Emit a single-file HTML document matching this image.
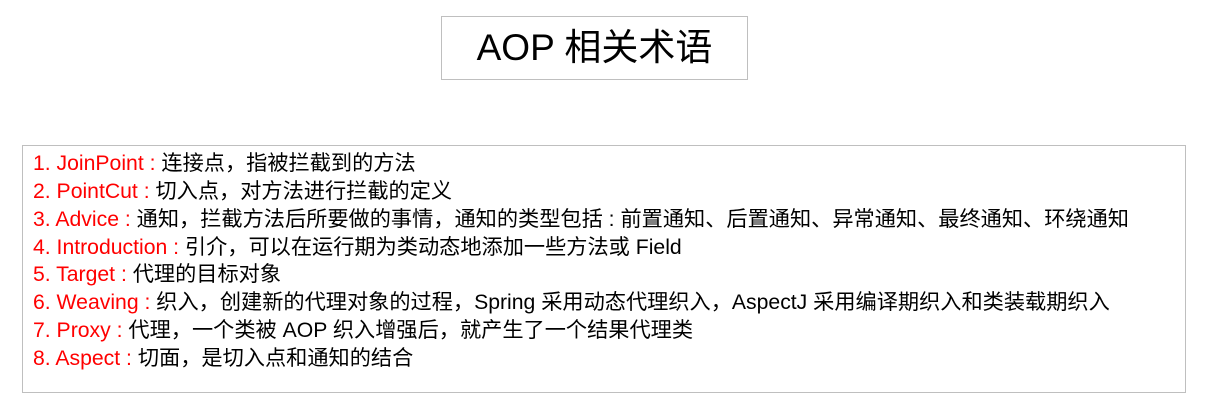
<!DOCTYPE html>
<html><head><meta charset="utf-8"><style>
body{margin:0;width:1208px;height:420px;background:#fff;position:relative;font-family:"Liberation Sans","Noto Sans CJK SC",sans-serif;}
.t{position:absolute;left:441px;top:16px;width:305px;height:62px;border:1px solid #bfbfbf;font-size:37px;line-height:62px;text-align:center;color:#000;}
.b{position:absolute;left:22px;top:145px;width:1162px;height:246px;border:1px solid #bfbfbf;}
.l{position:absolute;left:10px;font-size:21.2px;white-space:nowrap;color:#000;line-height:26px;}
.r{color:#f00}
</style></head><body>
<div class="t">AOP 相关术语</div>
<div class="b">
<div class="l" style="top:5px"><span class="r">1. JoinPoint :</span> 连接点，指被拦截到的方法</div>
<div class="l" style="top:33px"><span class="r">2. PointCut :</span> 切入点，对方法进行拦截的定义</div>
<div class="l" style="top:61px"><span class="r">3. Advice :</span> 通知，拦截方法后所要做的事情，通知的类型包括 : 前置通知、后置通知、异常通知、最终通知、环绕通知</div>
<div class="l" style="top:89px"><span class="r">4. Introduction :</span> 引介，可以在运行期为类动态地添加一些方法或 Field</div>
<div class="l" style="top:116px"><span class="r">5. Target :</span> 代理的目标对象</div>
<div class="l" style="top:144px"><span class="r">6. Weaving :</span> 织入，创建新的代理对象的过程，Spring 采用动态代理织入，AspectJ 采用编译期织入和类装载期织入</div>
<div class="l" style="top:172px"><span class="r">7. Proxy :</span> 代理，一个类被 AOP 织入增强后，就产生了一个结果代理类</div>
<div class="l" style="top:200px"><span class="r">8. Aspect :</span> 切面，是切入点和通知的结合</div>
</div>
</body></html>
